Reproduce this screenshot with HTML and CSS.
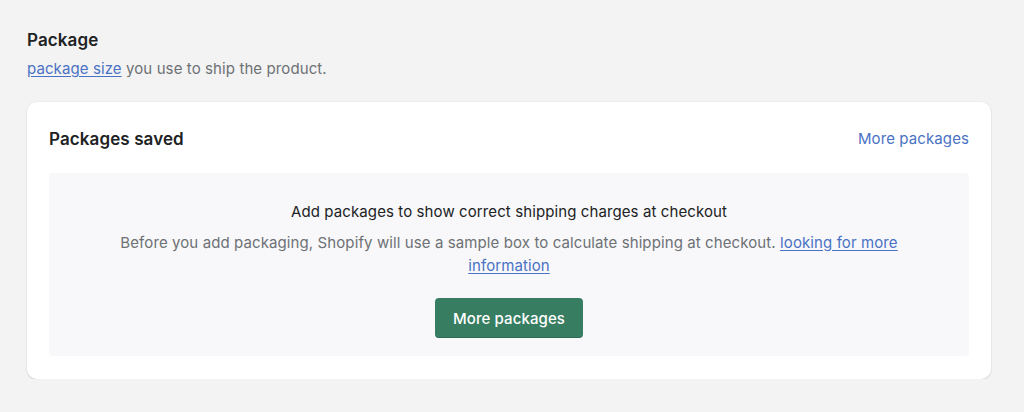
FILE: index.html
```html
<!DOCTYPE html>
<html lang="en">
<head>
<meta charset="utf-8">
<title>Package</title>
<link rel="stylesheet" href="styles.css">
</head>
<body>
<div class="page">
  <section class="section-head">
    <h2 class="section-title">Package</h2>
    <p class="section-desc"><a href="#" class="link">package size</a> you use to ship the product.</p>
  </section>
  <div class="card">
    <div class="card-header">
      <h3 class="card-title">Packages saved</h3>
      <a href="#" class="plain-link">More packages</a>
    </div>
    <div class="empty">
      <p class="empty-title">Add packages to show correct shipping charges at checkout</p>
      <p class="empty-text">Before you add packaging, Shopify will use a sample box to calculate shipping at checkout. <a href="#" class="link">looking for more information</a></p>
      <button class="btn-primary" type="button">More packages</button>
    </div>
  </div>
</div>
</body>
</html>
```
FILE: styles.css
```css
* { box-sizing: border-box; }
html, body { margin: 0; padding: 0; }
body {
  background: #f3f3f3;
  font-family: Inter, "Noto Sans", sans-serif;
  color: #202223;
  font-size: 15px;
  letter-spacing: 0.1px;
}
.page {
  width: 964px;
  margin-left: 27px;
  padding-top: 28px;
}
.section-title {
  margin: 0;
  font-size: 17px;
  line-height: 24px;
  font-weight: 600;
  color: #202223;
}
.section-desc {
  margin: 6px 0 0;
  font-size: 15px;
  line-height: 22px;
  color: #6d7175;
}
.link {
  color: #4a72c4;
  text-decoration: underline;
  text-underline-offset: 2px;
}
.card {
  margin-top: 22px;
  background: #fff;
  border-radius: 10px;
  box-shadow: 0 1px 2px rgba(0,0,0,0.12), 0 0 0 1px rgba(0,0,0,0.02);
  padding: 25px 22px 23px;
}
.card-header {
  display: flex;
  justify-content: space-between;
  align-items: center;
}
.card-title {
  margin: 0;
  font-size: 17px;
  line-height: 24px;
  font-weight: 600;
}
.plain-link {
  color: #4a72c4;
  text-decoration: none;
  font-size: 15px;
  line-height: 24px;
}
.empty {
  margin-top: 22px;
  background: #f8f8fa;
  border-radius: 4px;
  padding: 28px 50px 18px;
  text-align: center;
}
.empty-title {
  margin: 0;
  font-size: 15px;
  line-height: 22px;
  color: #202223;
}
.empty-text {
  margin: 8px 0 0;
  font-size: 15px;
  line-height: 23px;
  color: #6d7175;
}
.btn-primary {
  margin-top: 21px;
  height: 40px;
  padding: 0 18px;
  background: #377d62;
  color: #fff;
  border: 0;
  border-radius: 4px;
  font-family: inherit;
  font-size: 15px;
  font-weight: 500;
  letter-spacing: 0.1px;
  box-shadow: inset 0 -1px 0 rgba(0,0,0,0.15);
}
```
